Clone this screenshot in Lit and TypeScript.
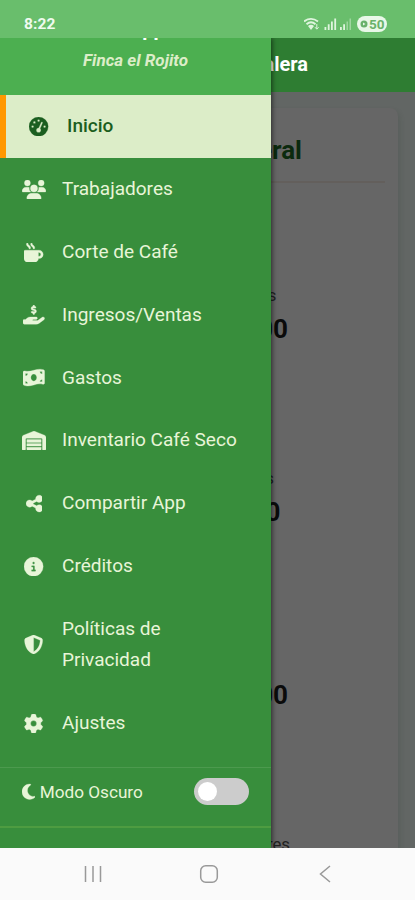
import { LitElement, html, css, svg } from "lit";
import { customElement } from "lit/decorators.js";
import { classMap } from "lit/directives/class-map.js";

interface Glyph { w: number; d: string; }

const ICONS: Record<string, Glyph> = {
  gauge: { w: 512, d: "M0 256a256 256 0 1 1 512 0A256 256 0 1 1 0 256zM288 96a32 32 0 1 0 -64 0 32 32 0 1 0 64 0zM256 416c35.3 0 64-28.7 64-64c0-17.4-6.9-33.1-18.1-44.6L366 161.7c5.3-12.1-.2-26.3-12.3-31.6s-26.3 .2-31.6 12.3L257.9 288c-.6 0-1.3 0-1.9 0c-35.3 0-64 28.7-64 64s28.7 64 64 64zM176 144a32 32 0 1 0 -64 0 32 32 0 1 0 64 0zM96 288a32 32 0 1 0 0-64 32 32 0 1 0 0 64zm352-32a32 32 0 1 0 -64 0 32 32 0 1 0 64 0z" },
  users: { w: 640, d: "M144 0a80 80 0 1 1 0 160A80 80 0 1 1 144 0zM512 0a80 80 0 1 1 0 160A80 80 0 1 1 512 0zM0 298.7C0 239.8 47.8 192 106.7 192h42.7c15.9 0 31 3.5 44.6 9.7c-1.3 7.2-1.9 14.7-1.9 22.3c0 38.2 16.8 72.5 43.3 96c-.2 0-.4 0-.7 0H21.3C9.6 320 0 310.4 0 298.7zM405.3 320c-.2 0-.4 0-.7 0c26.6-23.5 43.3-57.8 43.3-96c0-7.6-.7-15-1.9-22.3c13.6-6.3 28.7-9.7 44.6-9.7h42.7C592.2 192 640 239.8 640 298.7c0 11.8-9.6 21.3-21.3 21.3H405.3zM224 224a96 96 0 1 1 192 0 96 96 0 1 1 -192 0zM128 485.3C128 411.7 187.7 352 261.3 352H378.7C452.3 352 512 411.7 512 485.3c0 14.7-11.9 26.7-26.7 26.7H154.7c-14.7 0-26.7-11.9-26.7-26.7z" },
  mug: { w: 512, d: "M88 0C74.7 0 64 10.7 64 24c0 38.9 23.4 59.4 39.1 73.1l1.1 1C120.5 112.3 128 119.9 128 136c0 13.3 10.7 24 24 24s24-10.7 24-24c0-38.9-23.4-59.4-39.1-73.1l-1.1-1C119.5 47.7 112 40.1 112 24c0-13.3-10.7-24-24-24zM32 192c-17.7 0-32 14.3-32 32V416c0 53 43 96 96 96H288c53 0 96-43 96-96h16c61.9 0 112-50.1 112-112s-50.1-112-112-112H352 32zm352 64h16c26.5 0 48 21.5 48 48s-21.5 48-48 48H384V256zM224 24c0-13.3-10.7-24-24-24s-24 10.7-24 24c0 38.9 23.4 59.4 39.1 73.1l1.1 1C232.5 112.3 240 119.9 240 136c0 13.3 10.7 24 24 24s24-10.7 24-24c0-38.9-23.4-59.4-39.1-73.1l-1.1-1C231.5 47.7 224 40.1 224 24z" },
  hand: { w: 576, d: "M312 24V34.5c6.4 1.2 12.6 2.7 18.2 4.2c12.8 3.4 20.4 16.6 17 29.4s-16.6 20.4-29.4 17c-10.9-2.9-21.1-4.9-30.2-5c-7.3-.1-14.7 1.7-19.4 4.4c-2.1 1.3-3.1 2.4-3.5 3c-.3 .5-.7 1.2-.7 2.8c0 .3 0 .5 0 .6c.2 .2 .9 1.2 3.3 2.6c5.8 3.5 14.4 6.2 27.4 10.1l.9 .3c11.1 3.3 25.9 7.8 37.9 15.3c13.7 8.6 26.1 22.9 26.4 44.9c.3 22.5-11.4 38.9-26.7 48.5c-6.7 4.1-13.9 7-21.3 8.8V232c0 13.3-10.7 24-24 24s-24-10.7-24-24V220.6c-9.5-2.3-18.2-5.3-25.6-7.8c-2.1-.7-4.1-1.4-6-2c-12.6-4.2-19.4-17.8-15.2-30.4s17.8-19.4 30.4-15.2c2.6 .9 5 1.7 7.3 2.5c13.6 4.6 23.4 7.9 33.9 8.3c8 .3 15.1-1.6 19.2-4.1c1.9-1.2 2.8-2.2 3.2-2.9c.4-.6 .9-1.8 .8-4.1l0-.2c0-1 0-2.1-4-4.6c-5.7-3.6-14.3-6.4-27.1-10.3l-1.9-.6c-10.8-3.2-25-7.5-36.4-14.4c-13.5-8.1-26.5-22-26.6-44.1c-.1-22.9 12.9-38.6 27.7-47.4c6.4-3.8 13.3-6.4 20.2-8.2V24c0-13.3 10.7-24 24-24s24 10.7 24 24zM568.2 336.3c13.1 17.8 9.3 42.8-8.5 55.9L433.1 485.5c-23.4 17.2-51.6 26.5-80.7 26.5H192 32c-17.7 0-32-14.3-32-32V416c0-17.7 14.3-32 32-32H68.8l44.9-36c22.7-18.2 50.9-28 80-28H272h16 64c17.7 0 32 14.3 32 32s-14.3 32-32 32H288 272c-8.8 0-16 7.2-16 16s7.2 16 16 16H392.6l119.7-88.2c17.8-13.1 42.8-9.3 55.9 8.5z" },
  bill: { w: 576, d: "M0 112.5V422.3c0 18 10.1 35 27 41.3c87 32.5 174 10.3 261-11.9c79.8-20.3 159.6-40.7 239.3-18.9c23 6.3 48.7-9.5 48.7-33.4V89.7c0-18-10.1-35-27-41.3C462 15.9 375 38.1 288 60.3C208.2 80.6 128.4 100.9 48.7 79.1C25.6 72.8 0 88.6 0 112.5zM288 352c-44.2 0-80-43-80-96s35.8-96 80-96s80 43 80 96s-35.8 96-80 96zM64 352c35.3 0 64 28.7 64 64H64V352zm64-208c0 35.3-28.7 64-64 64V144h64zM512 304v64H448c0-35.3 28.7-64 64-64zM448 96h64v64c-35.3 0-64-28.7-64-64z" },
  warehouse: { w: 640, d: "M0 488V171.3c0-26.2 15.9-49.7 40.2-59.4L308.1 4.8c7.6-3.1 16.1-3.1 23.8 0L599.8 111.9c24.3 9.7 40.2 33.3 40.2 59.4V488c0 13.3-10.7 24-24 24H568c-13.3 0-24-10.7-24-24V224c0-17.7-14.3-32-32-32H128c-17.7 0-32 14.3-32 32V488c0 13.3-10.7 24-24 24H24c-13.3 0-24-10.7-24-24zm488 24l-336 0c-13.3 0-24-10.7-24-24V432H512l0 56c0 13.3-10.7 24-24 24zM128 400V336H512v64H128zm0-96V224H512l0 80H128z" },
  share: { w: 448, d: "M352 224c53 0 96-43 96-96s-43-96-96-96s-96 43-96 96c0 4 .2 8 .7 11.9l-94.1 47C145.4 170.2 121.9 160 96 160c-53 0-96 43-96 96s43 96 96 96c25.9 0 49.4-10.2 66.6-26.9l94.1 47c-.5 3.9-.7 7.8-.7 11.9c0 53 43 96 96 96s96-43 96-96s-43-96-96-96c-25.9 0-49.4 10.2-66.6 26.9l-94.1-47c.5-3.9 .7-7.8 .7-11.9s-.2-8-.7-11.9l94.1-47C302.6 213.8 326.1 224 352 224z" },
  info: { w: 512, d: "M256 512A256 256 0 1 0 256 0a256 256 0 1 0 0 512zM216 336h24V272H216c-13.3 0-24-10.7-24-24s10.7-24 24-24h48c13.3 0 24 10.7 24 24v88h8c13.3 0 24 10.7 24 24s-10.7 24-24 24H216c-13.3 0-24-10.7-24-24s10.7-24 24-24zm40-208a32 32 0 1 1 0 64 32 32 0 1 1 0-64z" },
  shield: { w: 512, d: "M256 0c4.6 0 9.2 1 13.4 2.9L457.7 82.8c22 9.3 38.4 31 38.3 57.2c-.5 99.2-41.3 280.7-213.6 363.2c-16.7 8-36.1 8-52.8 0C57.3 420.7 16.5 239.2 16 140c-.1-26.2 16.3-47.9 38.3-57.2L242.7 2.9C246.8 1 251.4 0 256 0zm0 66.8V444.8C394 378 431.1 230.1 432 141.4L256 66.8z" },
  gear: { w: 512, d: "M495.9 166.6c3.2 8.7 .5 18.4-6.4 24.6l-43.3 39.4c1.1 8.3 1.7 16.8 1.7 25.4s-.6 17.1-1.7 25.4l43.3 39.4c6.9 6.2 9.6 15.9 6.4 24.6c-4.4 11.9-9.7 23.3-15.8 34.3l-4.7 8.1c-6.6 11-14 21.4-22.1 31.2c-5.9 7.2-15.7 9.6-24.5 6.8l-55.7-17.7c-13.4 10.3-28.2 18.9-44 25.4l-12.5 57.1c-2 9.1-9 16.3-18.2 17.8c-13.8 2.3-28 3.5-42.5 3.5s-28.7-1.2-42.5-3.5c-9.2-1.5-16.2-8.7-18.2-17.8l-12.5-57.1c-15.8-6.5-30.6-15.1-44-25.4L83.1 425.9c-8.8 2.8-18.6 .3-24.5-6.8c-8.1-9.8-15.5-20.2-22.1-31.2l-4.7-8.1c-6.1-11-11.4-22.4-15.8-34.3c-3.2-8.7-.5-18.4 6.4-24.6l43.3-39.4C64.6 273.1 64 264.6 64 256s.6-17.1 1.7-25.4L22.4 191.2c-6.9-6.2-9.6-15.9-6.4-24.6c4.4-11.9 9.7-23.3 15.8-34.3l4.7-8.1c6.6-11 14-21.4 22.1-31.2c5.9-7.2 15.7-9.6 24.5-6.8l55.7 17.7c13.4-10.3 28.2-18.9 44-25.4l12.5-57.1c2-9.1 9-16.3 18.2-17.8C227.3 1.2 241.5 0 256 0s28.7 1.2 42.5 3.5c9.2 1.5 16.2 8.7 18.2 17.8l12.5 57.1c15.8 6.5 30.6 15.1 44 25.4l55.7-17.7c8.8-2.8 18.6-.3 24.5 6.8c8.1 9.8 15.5 20.2 22.1 31.2l4.7 8.1c6.1 11 11.4 22.4 15.8 34.3zM256 336a80 80 0 1 0 0-160 80 80 0 1 0 0 160z" },
  moon: { w: 384, d: "M223.5 32C100 32 0 132.3 0 256S100 480 223.5 480c60.6 0 115.5-24.2 155.8-63.4c5-4.9 6.3-12.5 3.1-18.7s-10.1-9.7-17-8.5c-9.8 1.7-19.8 2.6-30.1 2.6c-96.9 0-175.5-78.8-175.5-176c0-65.8 36-123.1 89.3-153.3c6.1-3.5 9.2-10.5 7.7-17.3s-7.3-11.9-14.3-12.5c-6.3-.5-12.6-.8-19-.8z" },
};

const icon = (name: string, size: number) => {
  const g = ICONS[name];
  return html`<svg width=${(g.w / 512) * size} height=${size} viewBox="0 0 ${g.w} 512">${svg`<path fill="currentColor" stroke="currentColor" stroke-width="8" fill-rule="evenodd" d=${g.d}></path>`}</svg>`;
};

const MENU = [
  { icon: "gauge", label: "Inicio", active: true },
  { icon: "users", label: "Trabajadores" },
  { icon: "mug", label: "Corte de Café" },
  { icon: "hand", label: "Ingresos/Ventas" },
  { icon: "bill", label: "Gastos" },
  { icon: "warehouse", label: "Inventario Café Seco" },
  { icon: "share", label: "Compartir App" },
  { icon: "info", label: "Créditos" },
  { icon: "shield", label: "Políticas de Privacidad" },
  { icon: "gear", label: "Ajustes" },
];

/* labelEnd and valueEnd are the widths at which each line finishes */
const STATS = [
  { label: "Ingresos", labelEnd: 276.5, value: "0.00", valueEnd: 288 },
  { label: "Gastos", labelEnd: 274, value: "0.00", valueEnd: 280.5 },
  { label: "Balance", labelEnd: 260, value: "0.00", valueEnd: 288 },
  { label: "Trabajadores", labelEnd: 290, value: "", valueEnd: 210 },
];

@customElement("app-root")
export class AppRoot extends LitElement {
  static styles = css`
    :host { display: block; width: 415px; height: 900px; overflow: hidden; font-family: Roboto, "Liberation Sans", sans-serif; }
    * { box-sizing: border-box; }
    svg { display: block; flex: none; }
    .screen { height: 900px; display: grid; grid-template-rows: 38px 810px 52px; background: #fafafa; }
    .status { background: #69be6c; color: #f0fbef; display: flex; align-items: center; justify-content: space-between; padding: 10px 28px 0 24px; }
    .clock { font-size: 15.5px; font-weight: 700; letter-spacing: .1px; }
    .signals { display: flex; align-items: center; gap: 5px; }
    .battery { width: 30px; height: 16px; border-radius: 8px; background: #e9f8e8; color: #69b26b; font-size: 13.5px; font-weight: 700; line-height: 16.5px; display: flex; align-items: center; gap: 1px; padding-left: 3px; }
    .body { position: relative; overflow: hidden; background: #626664; }
    .bar { height: 54px; background: #2e7d32; color: #fff; font-size: 20px; font-weight: 700; line-height: 52px; text-align: right; width: 415px; padding-right: 107px; }
    .card { margin: 16px 15px 0 12px; width: 386px; height: 900px; background: #666; border-radius: 8px; box-shadow: 2px 3px 5px rgba(40, 55, 50, .15); }
    .title { width: 290px; text-align: right; color: #0b2a0e; font-size: 26px; font-weight: 700; line-height: 41px; padding-top: 22px; height: 73px; }
    .rule { height: 2px; margin: 0 13px; background: #635f5c; }
    .stats { padding-top: 100px; }
    .stat { height: 183px; color: #0b0b0b; }
    .label { text-align: right; font-size: 16.8px; line-height: 24px; height: 30px; color: #222; margin-left: -12px; }
    .value { text-align: right; font-size: 26px; font-weight: 700; line-height: 32px; margin-left: -12px; }
    .drawer { position: absolute; left: 0; top: 0; width: 271px; height: 810px; overflow: hidden; background: #388e3c; box-shadow: 1px 0 5px rgba(0, 0, 0, .6); color: #e8f5d8; }
    .head { height: 57px; background: #4caf50; text-align: center; overflow: hidden; }
    .appname { font-size: 20px; font-weight: 700; line-height: 24px; margin-top: -21px; margin-left: -5px; color: #fff; }
    .farm { font-size: 17px; font-style: italic; font-weight: 700; line-height: 24px; margin-top: 7px; color: #dcedc8; }
    .item { display: flex; align-items: center; padding: 16px 20px; font-size: 19.05px; line-height: 30.87px; }
    .active { background: #dcedc8; color: #1b5e20; font-weight: 500; border-left: 6px solid #ff9800; padding-left: 19px; }
    .glyph { width: 28px; flex: none; display: flex; justify-content: center; margin-right: 14px; }
    .mode { margin-top: 12px; height: 61px; border-top: 1px solid #4c9a4e; border-bottom: 2px solid #4e9c41; display: flex; align-items: center; padding: 0 22px 10px; font-size: 17.2px; }
    .mode span { flex: 1; margin-left: 4.5px; }
    .switch { width: 55px; height: 27px; border-radius: 14px; background: #ccc; padding: 4px; }
    .knob { width: 19px; height: 19px; border-radius: 50%; background: #fff; }
    .nav { display: grid; grid-template-columns: repeat(3, 116px); justify-content: center; justify-items: center; align-items: center; padding-left: 3px; color: #999; }
  `;

  render() {
    return html`<div class="screen">
      <div class="status">
        <div class="clock">8:22</div>
        <div class="signals">
          <svg width="48" height="14" viewBox="0 0 48 14">
            <g fill="none" stroke="#dff5de" stroke-width="1.9">
              <path d="M0 4.5Q7-.8 14 4.5"></path><path d="M2.5 7.2Q7 3.4 11.5 7.2"></path>
            </g>
            <path d="M4 9Q7 6.6 10 9L7 13z" fill="#dff5de"></path>
            <path d="M12.8 7v5m-1.8-1.8l1.8 2 1.8-2" stroke="#dff5de" fill="none"></path>
            <g fill="#dff5de"><path d="M20.5 10h1.8v3H20.5zM23.8 7.3h1.8V13h-1.8zM27 4.5h1.8V13H27zM30.3 1.5h1.8V13h-1.8z"></path>
            <path d="M36 10h1.8v3H36zM39.2 7.3H41V13h-1.8z"></path><path opacity=".45" d="M42.5 4.5h1.5V13h-1.5zM45.5 1.5H47V13h-1.5z"></path></g>
          </svg>
          <div class="battery"><svg width="8" height="8" viewBox="0 0 8 8"><circle cx="4" cy="4" r="3.5" fill="#69b26b"></circle><path d="M3 2.5L5.5 4 3 5.5z" fill="#e9f8e8"></path></svg>50</div>
        </div>
      </div>
      <div class="body">
        <div class="bar">Cafetalera</div>
        <div class="card">
          <div class="title">General</div>
          <div class="rule"></div>
          <div class="stats">${STATS.map((s) => html`<div class="stat">
            <div class="label" style="width:${s.labelEnd}px">${s.label}</div>
            <div class="value" style="width:${s.valueEnd}px">${s.value}</div>
          </div>`)}</div>
        </div>
        <div class="drawer">
          <div class="head"><div class="appname">Mi App</div><div class="farm">Finca el Rojito</div></div>
          ${MENU.map((m) => html`<div class=${classMap({ item: true, active: !!m.active })}><div class="glyph">${icon(m.icon, 19.2)}</div><div>${m.label}</div></div>`)}
          <div class="mode">${icon("moon", 17.5)}<span>Modo Oscuro</span><div class="switch"><div class="knob"></div></div></div>
        </div>
      </div>
      <div class="nav">
        <svg width="18" height="18" viewBox="0 0 18 18"><path d="M1.5 1v16M9 1v16M16.5 1v16" stroke="currentColor" stroke-width="1.5"></path></svg>
        <svg width="20" height="20" viewBox="0 0 20 20"><rect x="1.7" y="1.7" width="16.6" height="16.6" rx="5" fill="none" stroke="currentColor" stroke-width="1.5"></rect></svg>
        <svg width="12" height="18" viewBox="0 0 12 18"><path d="M11 1L1.5 9 11 17" fill="none" stroke="currentColor" stroke-width="1.5"></path></svg>
      </div>
    </div>`;
  }
}
